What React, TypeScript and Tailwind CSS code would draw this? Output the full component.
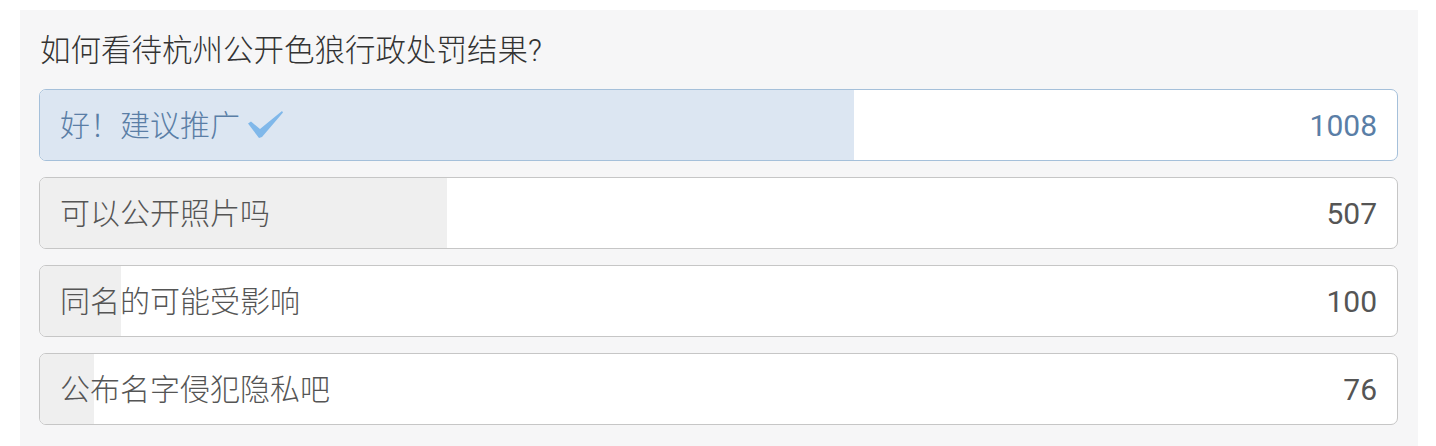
const options = [
  { label: '好！建议推广', count: 1008, selected: true },
  { label: '可以公开照片吗', count: 507, selected: false },
  { label: '同名的可能受影响', count: 100, selected: false },
  { label: '公布名字侵犯隐私吧', count: 76, selected: false },
];

function Check() {
  return (
    <svg width="38" height="32" viewBox="0 0 38 32" className="ml-[6px]">
      <path d="M2 14.5 L5 12.5 L14 20 L36 2 L37 3.5 L16 28 L13 29 Z" fill="#80b8ea" />
    </svg>
  );
}

export default function App() {
  const total = options.reduce((s, o) => s + o.count, 0);

  return (
    <div className="min-h-[446px] bg-white pt-[10px] font-['Roboto','Noto_Sans_CJK_SC',sans-serif] font-light">
      <div className="ml-[20px] w-[1398px] min-h-[436px] bg-[#f6f6f7] pl-[19px] pr-[20px] pt-[18px]">
        <h2 className="pl-px text-[30.5px] leading-[45px] text-[#333]">如何看待杭州公开色狼行政处罚结果?</h2>

        <div className="mt-[16px] flex flex-col gap-[16px]">
          {options.map((o) => {
            // 按四舍五入的百分比画进度条
            const pct = Math.round((o.count / total) * 100);
            return (
              <div
                key={o.label}
                className={
                  'relative h-[72px] overflow-hidden rounded-[7px] border bg-white ' +
                  (o.selected ? 'border-[#a5c0da]' : 'border-[#c6c6c6]')
                }
              >
                <div
                  className={'absolute inset-y-0 left-0 ' + (o.selected ? 'bg-[#dce6f2]' : 'bg-[#efefef]')}
                  style={{ width: pct + '%' }}
                />
                <div
                  className={
                    'relative flex h-full items-center justify-between pl-[20px] pr-[20px] text-[30px] ' +
                    (o.selected ? 'text-[#5a7ea6]' : 'text-[#555]')
                  }
                >
                  <div className="flex items-center">
                    <span>{o.label}</span>
                    {o.selected && <Check />}
                  </div>
                  <span className="font-normal">{o.count}</span>
                </div>
              </div>
            );
          })}
        </div>
      </div>
    </div>
  );
}
